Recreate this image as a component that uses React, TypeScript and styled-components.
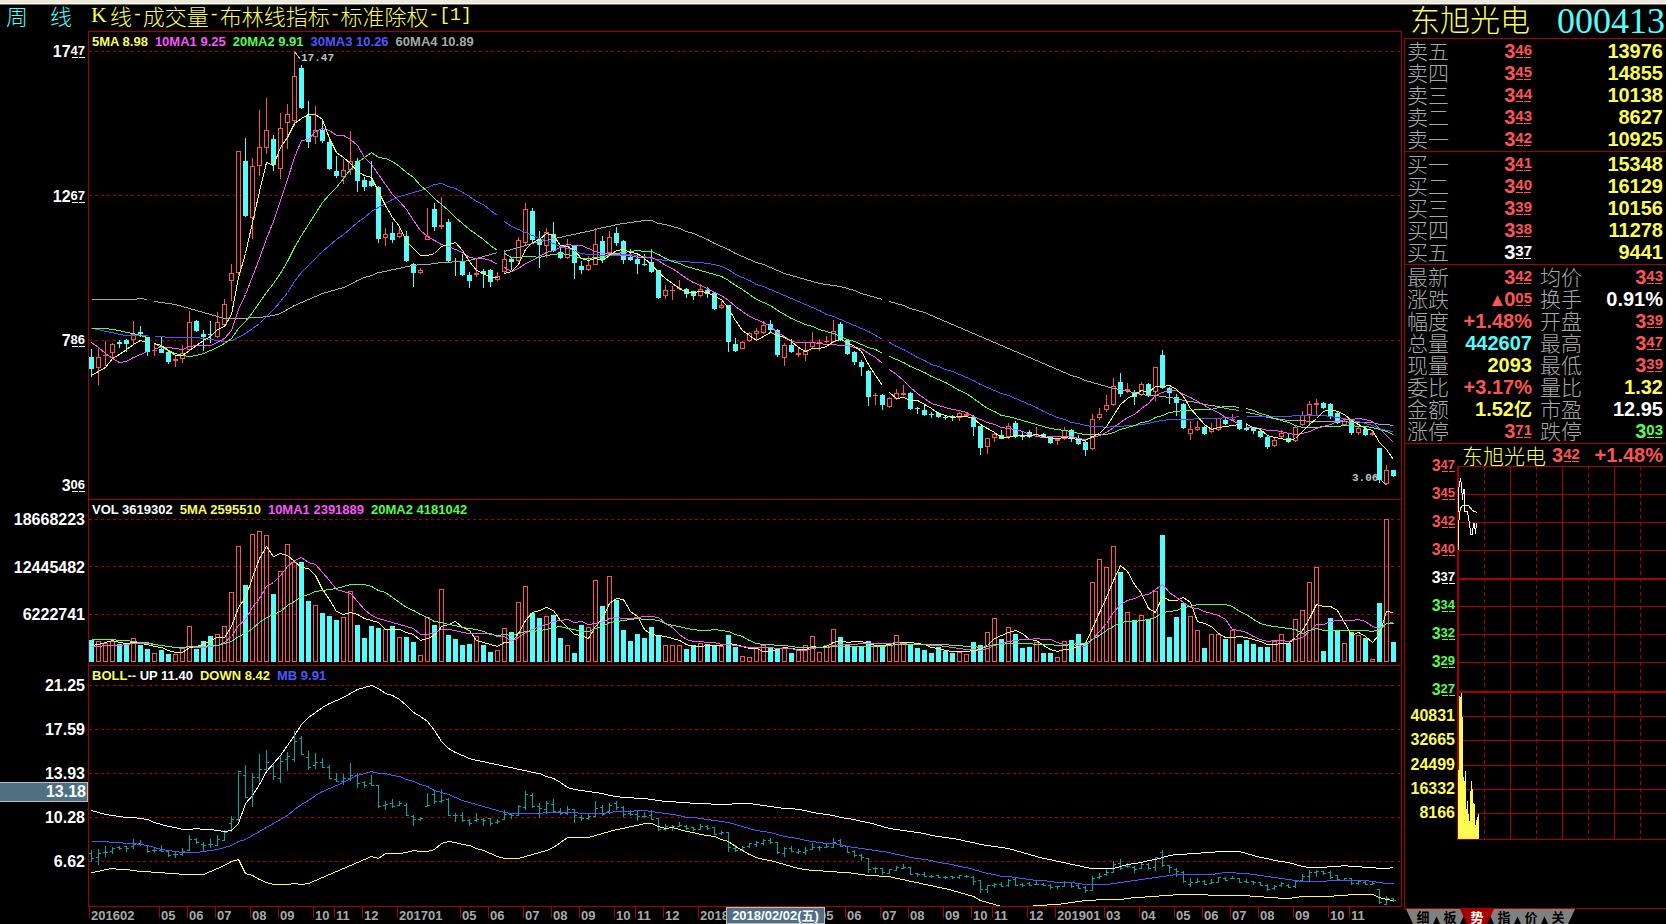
import React, { useState } from "react";
import styled, { createGlobalStyle, css } from "styled-components";

const color = {
  red: "#fc5454",
  cyan: "#54fcfc",
  yellow: "#fcfc54",
  magenta: "#fc54fc",
  green: "#54fc54",
  blue: "#5454fc",
  gray: "#a8a8a8",
  white: "#ffffff",
  line: "#a80000",
  teal: "#00a8a8",
  badge: "#4e7083",
};

const sans = `"Liberation Sans", Arial, "Noto Sans CJK SC", sans-serif`;
const cjk = `"Noto Sans CJK SC", "Liberation Sans", sans-serif`;

/* ---------- data ---------- */

type Point = [number, number];
type Candle = [number, number, number, number, 0 | 1];

// Weekly candles as canvas rows: high, body top, body bottom, low, rising flag.
// Row 51 is 17.47 and row 485 is 3.06.
const CANDLES: Candle[] = [
  [349,357,369,377,0],[347,357,368,385,1],[341,355,355,366,1],[343,344,353,358,1],[340,342,344,348,0],
  [339,340,344,352,0],[321,334,340,344,1],[326,332,334,337,0],[337,337,352,356,0],[344,350,351,356,1],
  [337,349,353,353,0],[351,352,362,364,0],[355,359,361,367,1],[345,353,359,363,1],[311,322,350,351,1],
  [320,321,331,332,0],[330,334,337,351,0],[321,334,335,343,0],[312,322,337,338,1],[299,304,325,325,1],
  [264,273,281,301,1],[151,151,273,275,1],[138,161,216,217,0],[158,166,218,239,1],[110,147,166,176,1],
  [98,130,148,154,1],[135,139,165,171,0],[113,128,169,179,1],[104,114,123,149,1],[51,76,121,126,1],
  [65,68,108,109,0],[101,116,142,148,0],[106,130,137,144,1],[119,130,141,143,0],[138,142,169,170,0],
  [156,171,176,178,0],[159,170,177,184,1],[131,161,170,175,1],[158,161,181,192,0],[177,180,187,191,0],
  [161,181,186,187,0],[186,187,239,243,0],[228,234,238,246,1],[222,233,240,243,0],[227,233,237,238,1],
  [231,236,261,262,0],[263,264,273,287,0],[268,270,273,274,1],[208,236,240,240,1],[203,209,227,231,0],
  [197,225,227,229,1],[219,222,261,262,0],[258,261,262,276,0],[254,261,275,276,0],[272,275,281,288,0],
  [258,273,275,277,1],[269,271,274,288,0],[269,270,282,287,0],[272,276,280,281,1],[250,259,272,273,1],
  [257,259,262,270,0],[237,240,261,262,1],[203,209,243,246,1],[208,211,240,242,0],[231,239,245,268,0],
  [228,232,246,258,1],[222,234,251,252,0],[245,252,258,259,0],[239,246,258,259,1],[246,246,263,279,0],
  [261,266,270,274,0],[256,265,270,271,1],[228,244,265,265,1],[236,241,260,263,0],[231,237,253,256,1],
  [227,233,243,246,0],[240,241,260,264,0],[249,257,260,261,0],[253,259,264,274,0],[254,264,265,266,0],
  [249,262,272,273,0],[270,270,298,299,0],[285,290,296,299,1],[286,290,291,300,1],[280,288,289,290,1],
  [288,289,294,298,0],[291,291,296,300,0],[284,289,296,297,1],[287,290,294,298,0],[293,293,309,310,0],
  [301,305,308,309,1],[305,305,342,352,0],[338,344,351,352,0],[341,342,349,349,1],[332,333,341,342,1],
  [328,331,334,340,1],[321,325,333,334,1],[320,324,330,333,0],[329,330,355,357,0],[343,345,358,366,1],
  [339,345,352,353,0],[347,353,355,357,1],[342,350,355,361,1],[332,342,347,348,1],[339,342,343,351,1],
  [336,341,342,343,1],[320,331,342,343,1],[322,324,340,341,0],[339,340,354,355,0],[351,352,362,365,0],
  [360,362,367,376,0],[370,371,397,406,0],[393,395,396,405,1],[394,395,405,410,0],[397,398,407,408,1],
  [389,393,399,400,1],[385,393,395,396,1],[392,393,409,410,0],[407,408,409,414,0],[404,410,415,416,0],
  [412,414,415,418,0],[412,413,417,418,0],[415,417,418,420,0],[415,416,418,421,0],[412,413,418,421,1],
  [413,414,416,417,1],[415,417,427,436,0],[426,426,448,455,0],[438,438,447,454,1],[433,434,438,442,1],
  [430,435,439,439,0],[423,426,437,439,1],[421,423,437,438,0],[432,436,437,440,0],[430,432,437,438,0],
  [427,434,435,436,1],[433,434,437,438,0],[436,437,443,444,0],[439,439,441,445,1],[427,430,439,440,1],
  [429,430,439,442,0],[435,438,444,445,0],[440,442,450,456,0],[414,419,449,450,1],[408,414,418,420,1],
  [395,405,410,412,1],[378,386,405,406,1],[373,382,394,397,0],[383,389,391,393,1],[390,392,397,405,0],
  [382,384,395,396,1],[383,384,395,397,0],[367,367,392,401,1],[350,355,388,389,0],[387,388,393,404,0],
  [394,397,403,416,0],[403,404,428,429,0],[421,429,434,440,1],[421,427,430,431,1],[426,427,434,435,0],
  [423,429,432,433,1],[418,418,430,431,1],[418,420,424,425,0],[414,419,420,421,1],[420,420,429,430,0],
  [423,428,430,431,0],[427,428,431,434,0],[430,431,437,438,0],[436,437,447,449,0],[438,440,446,447,1],
  [430,433,437,439,1],[434,438,442,443,0],[425,427,441,442,1],[411,415,425,426,1],[401,404,415,426,1],
  [399,403,405,416,1],[402,403,408,409,0],[403,404,417,419,0],[412,413,423,424,0],[419,421,425,426,1],
  [419,420,433,435,0],[426,428,433,435,1],[427,429,435,436,0],[431,433,435,436,1],[448,448,480,483,0],
  [465,470,484,485,1],[470,470,476,477,0],
];

// Weekly volume, one unit per third of a canvas row above the base line.
const VOLUMES: number[] = [
  450,454,460,454,463,463,445,466,478,490,480,492,493,475,409,477,453,438,433,409,
  307,169,285,133,124,136,312,244,163,217,216,333,346,369,378,390,382,304,405,444,
  408,414,418,408,442,441,456,496,382,405,298,435,447,465,462,439,465,486,481,415,
  426,337,289,369,384,379,375,444,466,489,405,412,271,348,259,330,420,453,432,444,
  411,435,466,466,466,477,465,460,462,466,469,435,471,499,502,470,466,474,474,472,
  489,480,466,439,487,466,418,441,465,471,471,453,466,465,460,436,457,462,474,480,
  489,471,484,489,485,493,456,465,427,385,447,412,432,474,471,457,489,489,502,454,
  450,432,460,277,208,232,169,246,367,390,376,388,304,135,441,381,339,379,421,474,
  433,433,447,420,462,450,462,471,471,454,433,459,388,361,277,232,483,384,423,460,
  426,436,444,508,339,88,456,
].map((v) => 516 - v);

const VOLUME_BASE = 662;
// Weeks whose price was adjusted; average lines restart there.
const BREAKS = [9, 59, 114, 165];

const CLOSES = CANDLES.map(([, top, bottom, , up]) => (up ? top : bottom));
const VOLUME_ROWS = VOLUMES.map((v) => VOLUME_BASE - v / 3);

const BOLL_UP: Point[] = [
  [0,810],[2,814],[4,816],[6,817],[8,819],[10,824],[13,829],[15,828],[18,830],[19,831],[20,830],[21,823],
  [22,803],[23,795],[24,784],[25,771],[26,763],[27,755],[28,745],[29,735],[30,724],[31,717],[32,712],
  [33,707],[34,703],[36,697],[38,689],[40,685],[41,688],[42,693],[43,695],[44,699],[45,705],[46,712],
  [47,716],[48,721],[49,730],[50,741],[51,748],[53,755],[54,758],[56,761],[59,766],[62,770],[64,773],
  [66,778],[67,782],[68,787],[69,789],[72,792],[75,796],[80,799],[84,802],[90,804],[92,803],[94,803],
  [97,806],[101,809],[105,814],[109,819],[112,824],[114,828],[118,832],[122,837],[124,839],[127,844],
  [131,848],[135,856],[139,862],[142,867],[144,868],[146,868],[148,864],[152,859],[154,855],[157,853],
  [161,851],[164,851],[167,857],[171,862],[173,866],[175,867],[179,865],[183,867],[184,868],[186,867],
];
const BOLL_DOWN: Point[] = [
  [0,872],[3,868],[6,870],[8,871],[11,873],[14,874],[16,874],[18,868],[20,861],[21,859],[22,873],[23,875],
  [25,882],[26,884],[28,884],[29,883],[30,884],[31,883],[33,877],[36,868],[39,859],[40,856],[41,858],
  [42,853],[44,853],[46,850],[48,851],[49,849],[50,843],[51,841],[54,845],[57,853],[59,858],[61,858],
  [62,856],[64,852],[66,847],[68,837],[71,837],[75,829],[79,823],[80,823],[82,828],[83,827],[85,831],
  [89,836],[91,841],[93,850],[95,857],[98,862],[101,868],[105,871],[108,872],[111,875],[114,876],
  [118,882],[122,888],[126,896],[127,900],[130,906],[133,906],[138,904],[141,901],[144,899],[147,899],
  [149,897],[156,894],[164,895],[171,898],[173,896],[176,896],[180,894],[183,894],[184,897],[186,900],
];

// Values of an average before enough weeks are on screen to compute it.
function interpolate(points: Point[], i: number): number {
  const next = points.findIndex(([k]) => k >= i);
  if (next <= 0) return next === 0 ? points[0][1] : points[points.length - 1][1];
  const [k0, v0] = points[next - 1];
  const [k1, v1] = points[next];
  return v0 + ((v1 - v0) * (i - k0)) / (k1 - k0);
}

function average(values: number[], n: number, lead: Point[]): number[] {
  return values.map((_, i) =>
    i < n - 1
      ? interpolate(lead, i)
      : values.slice(i - n + 1, i + 1).reduce((a, b) => a + b, 0) / n
  );
}

const MA20 = average(CLOSES, 20, [
  [0,328],[2,328],[4,330],[6,333],[8,337],[9,343],[11,350],[13,355],[14,356],[16,353],[18,347],[19,343],
]);
const PRICE_LINES = [
  {
    stroke: color.gray,
    rows: average(CLOSES, 60, [
      [0,299],[6,299],[7,298],[8,299],[9,301],[12,304],[14,308],[16,312],[18,316],[19,318],[22,318],[25,316],
      [27,313],[29,305],[31,299],[33,293],[36,287],[38,280],[41,272],[45,266],[50,262],[54,260],[58,252],[59,253],
    ]),
  },
  {
    stroke: color.blue,
    rows: average(CLOSES, 30, [
      [0,328],[3,332],[5,335],[8,335],[9,336],[12,337],[15,337],[18,340],[19,341],[20,340],[22,333],[24,323],
      [26,309],[28,292],[30,273],
    ]),
  },
  { stroke: color.green, rows: MA20 },
  {
    stroke: color.magenta,
    rows: average(CLOSES, 10, [[0,342],[1,347],[2,353],[3,358],[4,362],[5,361],[6,357],[7,354],[8,351],[9,350]]),
  },
  { stroke: color.yellow, rows: average(CLOSES, 5, [[0,375],[1,371],[2,367],[3,358],[4,354]]) },
];
const VOLUME_LINES = [
  { stroke: color.yellow, rows: average(VOLUME_ROWS, 5, [[0,645],[1,644],[2,642],[3,640],[4,642]]) },
  { stroke: color.magenta, rows: average(VOLUME_ROWS, 10, [[0,646],[3,645],[5,644],[6,643],[9,643]]) },
  {
    stroke: color.green,
    rows: average(VOLUME_ROWS, 20, [[0,639],[3,639],[6,641],[8,642],[10,645],[12,647],[15,646],[17,645],[19,644]]),
  },
];

const MONTHS: [number, string][] = [
  [0,"201602"],[10,"05"],[14,"06"],[18,"07"],[23,"08"],[27,"09"],[32,"10"],[35,"11"],[39,"12"],
  [44,"201701"],[53,"05"],[57,"06"],[62,"07"],[66,"08"],[70,"09"],[75,"10"],[78,"11"],[82,"12"],
  [87,"2018"],[104,"05"],[108,"06"],[113,"07"],[117,"08"],[122,"09"],[126,"10"],[129,"11"],[134,"12"],
  [138,"201901"],[145,"03"],[150,"04"],[155,"05"],[159,"06"],[163,"07"],[167,"08"],[172,"09"],[177,"10"],[180,"11"],
];

type Tone = keyof typeof color;
type Quote = { text: string; tone: Tone; price?: boolean; mark?: boolean };

const q = (text: string, tone: Tone, price = false, mark = false): Quote => ({ text, tone, price, mark });

const ASKS: [string, Quote, string][] = [
  ["卖五", q("346", "red", true), "13976"],
  ["卖四", q("345", "red", true), "14855"],
  ["卖三", q("344", "red", true), "10138"],
  ["卖二", q("343", "red", true), "8627"],
  ["卖一", q("342", "red", true), "10925"],
];
const BIDS: [string, Quote, string][] = [
  ["买一", q("341", "red", true), "15348"],
  ["买二", q("340", "red", true), "16129"],
  ["买三", q("339", "red", true), "10156"],
  ["买四", q("338", "red", true), "11278"],
  ["买五", q("337", "white", true), "9441"],
];
const STATS: [string, Quote, string, Quote][] = [
  ["最新", q("342", "red", true), "均价", q("343", "red", true)],
  ["涨跌", q("005", "red", true, true), "换手", q("0.91%", "white")],
  ["幅度", q("+1.48%", "red"), "开盘", q("339", "red", true)],
  ["总量", q("442607", "cyan"), "最高", q("347", "red", true)],
  ["现量", q("2093", "yellow"), "最低", q("339", "red", true)],
  ["委比", q("+3.17%", "red"), "量比", q("1.32", "yellow")],
  ["金额", q("1.52亿", "yellow"), "市盈", q("12.95", "white")],
  ["涨停", q("371", "red", true), "跌停", q("303", "green", true)],
];
const DAY_PRICES: [string, Tone][] = [
  ["347","red"],["345","red"],["342","red"],["340","red"],["337","white"],
  ["334","green"],["332","green"],["329","green"],["327","green"],
];
const DAY_VOLUMES = ["40831", "32665", "24499", "16332", "8166"];
const DAY_BARS = [770,696,697,693,717,777,781,771,809,801,814,821,791,781,789,803,804,825,820,817,814];
const TABS = ["细", "板", "势", "指", "价", "关"];

/* ---------- styles ---------- */

const GlobalStyle = createGlobalStyle`
  * { box-sizing: border-box; }
  body { margin: 0; background: #000; color: #fff; font-family: ${sans}; }
`;

const Page = styled.div`
  background: #000;
`;

const WindowEdge = styled.div`
  height: 5px;
  background: #ece9d8;
  border-bottom: 1px solid #716f64;
  box-shadow: inset 0 -1px 0 #ffffff;
`;

const Columns = styled.main`
  display: grid;
  grid-template-columns: minmax(0, 1fr) 262px;
  column-gap: 2px;
`;

const Charts = styled.section`
  min-width: 0;
`;

const TitleRow = styled.header`
  display: grid;
  grid-template-columns: 88px 1fr;
  height: 26px;
  font: 300 22px/20px ${cjk};
`;

const Period = styled.div`
  display: flex;
  gap: 22px;
  padding-left: 6px;
  color: ${color.cyan};
`;

const Title = styled.h1`
  display: flex;
  margin: 0;
  padding-left: 3px;
  font: inherit;
  color: ${color.yellow};
  white-space: nowrap;
`;

const TitleLetter = styled.span`
  width: 19px;
  font-family: "Liberation Serif", serif;
`;

const TitleSign = styled.span`
  font-family: "Liberation Mono", monospace;
  font-size: 18px;
`;

const Panel = styled.section<{ $height: number }>`
  display: grid;
  grid-template-columns: 88px minmax(0, 1fr);
  height: ${(p) => p.$height}px;
`;

const Scale = styled.div<{ $bottom: number }>`
  position: relative;
  display: flex;
  flex-direction: column;
  justify-content: space-between;
  align-items: flex-end;
  padding: 11px 3px ${(p) => p.$bottom}px 0;
  font: bold 16px/20px ${sans};
`;

const CursorValue = styled.output`
  position: absolute;
  left: 0;
  right: 0;
  top: 117px;
  height: 20px;
  padding-right: 1px;
  border: 1px solid #c0c0c0;
  border-left: 0;
  background: ${color.badge};
  line-height: 18px;
  text-align: right;
`;

const Plot = styled.div`
  display: grid;
  grid-template: minmax(0, 1fr) / minmax(0, 1fr);
  border: solid ${color.line};
  border-width: 1px 1px 0;
`;

const Drawing = styled.svg`
  grid-area: 1 / 1;
  display: block;
  width: 100%;
  height: 100%;
  shape-rendering: crispEdges;
`;

const Legend = styled.div`
  grid-area: 1 / 1;
  display: flex;
  align-self: start;
  gap: 7px;
  padding: 2px 0 0 3px;
  font: bold 13px/16px ${sans};
  white-space: nowrap;
`;

const Tinted = styled.span<{ $tone: Tone }>`
  color: ${(p) => color[p.$tone]};
`;

const TimeRow = styled.div`
  position: relative;
  height: 18px;
  margin-left: 88px;
  border-top: 1px solid ${color.line};
`;

const TimeSvg = styled.svg`
  display: block;
  width: 100%;
  height: 17px;
  shape-rendering: crispEdges;
  font: bold 13px ${sans};
`;

const CursorDate = styled.output`
  position: absolute;
  left: 638px;
  top: 0;
  width: 99px;
  height: 17px;
  border: 1px solid #c0c0c0;
  background: ${color.badge};
  font: bold 13px/16px ${sans};
  text-align: center;
  white-space: nowrap;
`;

const Side = styled.aside`
  display: flex;
  flex-direction: column;
`;

const StockHead = styled.header`
  display: flex;
  justify-content: space-between;
  height: 33px;
  padding: 0 1px 0 6px;
  color: ${color.yellow};
`;

const StockName = styled.h2`
  margin: 0;
  font: 300 30px/26px ${cjk};
`;

const StockCode = styled.span`
  font: 36px/32px "Liberation Serif", serif;
  color: ${color.cyan};
`;

const Frame = styled.div`
  display: flex;
  flex-direction: column;
  height: 871px;
  border-left: 1px solid ${color.line};
  border-bottom: 1px solid ${color.line};
`;

const Block = styled.section`
  border-top: 1px solid ${color.line};
  padding: 1px 3px 1px 2px;
`;

const Quotes = styled.table`
  width: 100%;
  border-collapse: collapse;
  table-layout: fixed;
  font: bold 20px/22px ${sans};
`;

const Label = styled.th<{ $second?: boolean }>`
  width: ${(p) => (p.$second ? 50 : 42)}px;
  height: 22px;
  padding: 0 0 0 ${(p) => (p.$second ? 8 : 0)}px;
  font: 300 21px/20px ${cjk};
  text-align: left;
  vertical-align: top;
  white-space: nowrap;
  color: ${color.gray};
`;

const Value = styled.td<{ $tone: Tone; $first?: boolean }>`
  ${(p) => p.$first && css`width: 83px;`}
  height: 22px;
  padding: 0;
  text-align: right;
  vertical-align: top;
  white-space: nowrap;
  color: ${(p) => color[p.$tone]};
`;

const Unit = styled.span`
  font-size: 18px;
  line-height: 18px;
`;

const Cents = styled.span<{ $large: boolean }>`
  display: inline-block;
  font-size: ${(p) => (p.$large ? 15 : 13)}px;
  line-height: ${(p) => (p.$large ? 17 : 15)}px;
  vertical-align: ${(p) => (p.$large ? 3 : 2)}px;
  background: linear-gradient(to right, transparent 1px, currentColor 1px) bottom left /
    ${(p) => (p.$large ? 8 : 7)}px 1px repeat-x;
`;

const Rise = styled.svg`
  width: 11px;
  height: 11px;
  margin-right: 1px;
`;

const DayHead = styled.header`
  display: flex;
  align-items: center;
  height: 23px;
  padding-left: 57px;
  border-top: 1px solid ${color.line};
  font: bold 20px/22px ${sans};
  color: ${color.red};
  white-space: nowrap;
`;

const DayName = styled.h3`
  margin: 0 6px 0 0;
  font: 300 21px/20px ${cjk};
  color: ${color.yellow};
`;

const DayChange = styled.span`
  margin-left: auto;
  padding-right: 3px;
`;

const DayChart = styled.div`
  display: grid;
  grid-template-columns: 52px minmax(0, 1fr);
  height: 374px;
`;

const DayCanvas = styled.div`
  display: grid;
  grid-template: minmax(0, 1fr) / minmax(0, 1fr);
`;

const DayScale = styled.div`
  display: flex;
  flex-direction: column;
  align-items: flex-end;
  padding-right: 2px;
  font: bold 16px/20px ${sans};
`;

const DayLabels = styled.div<{ $height: number; $top: number }>`
  display: flex;
  flex-direction: column;
  justify-content: space-between;
  align-items: flex-end;
  height: ${(p) => p.$height}px;
  margin-top: ${(p) => p.$top}px;
`;

const Tabs = styled.div`
  display: flex;
  height: 15px;
  padding-left: 2px;
`;

const Tab = styled.button<{ $active: boolean }>`
  position: relative;
  z-index: ${(p) => (p.$active ? 1 : 0)};
  width: 34px;
  height: 15px;
  margin: 0 -7px 0 0;
  padding: 0;
  border: 0;
  clip-path: polygon(0 0, 100% 0, calc(100% - 7px) 100%, 7px 100%);
  background: ${(p) => (p.$active ? color.line : "#808080")};
  color: ${(p) => (p.$active ? "#fff" : "#000")};
  font: bold 13px/15px ${cjk};
  text-align: center;
`;

/* ---------- drawing helpers ---------- */

const xAt = (i: number) => 91 + 7 * i;

function Line({ rows, stroke, breaks = [] }: { rows: number[]; stroke: string; breaks?: number[] }) {
  const d = rows
    .map((y, i) => `${i === 0 || breaks.includes(i) ? "M" : "L"}${xAt(i) + 0.5} ${Math.round(y) + 0.5}`)
    .join("");
  return <path d={d} fill="none" stroke={stroke} />;
}

function GridRows({ rows, top }: { rows: number[]; top: number }) {
  return (
    <>
      {rows.map((y) => (
        <line key={y} x1="0" x2="100%" y1={y - top + 0.5} y2={y - top + 0.5} stroke={color.line} strokeDasharray="3 3" />
      ))}
    </>
  );
}

function Price({ text, large = true }: { text: string; large?: boolean }) {
  return (
    <span>
      {text.slice(0, -2)}
      <Cents $large={large}>{text.slice(-2)}</Cents>
    </span>
  );
}

function QuoteText({ quote }: { quote: Quote }) {
  const unit = quote.text.endsWith("亿");
  return (
    <>
      {quote.mark && (
        <Rise viewBox="0 0 11 11" role="img" aria-label="up">
          <path d="M5.5 0 11 11H0Z" fill={color.red} />
        </Rise>
      )}
      {quote.price ? <Price text={quote.text} /> : unit ? quote.text.slice(0, -1) : quote.text}
      {unit && <Unit>亿</Unit>}
    </>
  );
}

function PricePlot() {
  return (
    <Drawing aria-label="K线">
      <GridRows rows={[51, 195, 340]} top={32} />
      <g transform="translate(-89 -32)">
        {CANDLES.map(([high, top, bottom, low, up], i) => {
          const x = xAt(i);
          const tone = up ? color.red : color.cyan;
          const body = Math.max(1, bottom - top);
          return (
            <g key={i} fill={tone}>
              <rect x={x} y={high} width="1" height={low - high} />
              <rect x={x - 2} y={top} width="5" height={body} />
              {up === 1 && body > 2 && <rect x={x - 1} y={top + 1} width="3" height={body - 2} fill="#000" />}
            </g>
          );
        })}
        {PRICE_LINES.map((l) => (
          <Line key={l.stroke} {...l} breaks={BREAKS} />
        ))}
        <g fill="#c0c0c0" fontFamily="Liberation Mono, monospace" fontWeight="bold" fontSize="11">
          <text x="301" y="61">17.47</text>
          <text x="1352" y="481">3.06</text>
        </g>
        <path d="M295 52l5 7M1380 479l6 6" stroke="#c0c0c0" />
      </g>
    </Drawing>
  );
}

function VolumePlot() {
  return (
    <Drawing aria-label="成交量">
      <GridRows rows={[519, 566, 614]} top={500} />
      <g transform="translate(-89 -500)">
        {VOLUME_ROWS.map((row, i) => {
          const y = Math.round(row);
          const x = xAt(i) - 2;
          return CANDLES[i][4] ? (
            <rect key={i} x={x + 0.5} y={y + 0.5} width="4" height={VOLUME_BASE - y - 1} fill="none" stroke={color.red} />
          ) : (
            <rect key={i} x={x} y={y} width="5" height={VOLUME_BASE - y} fill={color.cyan} />
          );
        })}
        {VOLUME_LINES.map((l) => (
          <Line key={l.stroke} {...l} />
        ))}
      </g>
    </Drawing>
  );
}

// Rows of the price panel carried over to the Bollinger panel's scale.
const toBoll = (row: number) => Math.round(861 - (7.86 - (row - 340) / 30.15 - 6.62) * 12.03);

function BollPlot() {
  const weeks = CANDLES.map((_, i) => i);
  return (
    <Drawing aria-label="布林线">
      <GridRows rows={[685, 729, 773, 817, 861]} top={666} />
      <g transform="translate(-89 -666)">
        {CANDLES.map(([high, top, bottom, low, up], i) => {
          const x = xAt(i);
          const open = toBoll(up ? bottom : top);
          const close = toBoll(up ? top : bottom);
          return (
            <path
              key={i}
              stroke={color.teal}
              d={`M${x + 0.5} ${toBoll(high)}V${toBoll(low) + 1}M${x - 2} ${open + 0.5}H${x}M${x + 1} ${close + 0.5}h2`}
            />
          );
        })}
        <Line rows={weeks.map((i) => interpolate(BOLL_UP, i))} stroke={color.white} />
        <Line rows={weeks.map((i) => interpolate(BOLL_DOWN, i))} stroke={color.yellow} />
        <Line rows={MA20.map(toBoll)} stroke={color.blue} />
      </g>
    </Drawing>
  );
}

function DayPlot() {
  return (
    <Drawing aria-label="分时">
      <g fill={color.line}>
        {[466, 494, 522, 550, 606, 634, 662, 716, 740, 765, 789, 813, 839].map((y) => (
          <rect key={y} x="0" y={y - 466} width="100%" height="1" />
        ))}
        <rect y="112" width="100%" height="2" />
        <rect y="225" width="100%" height="2" />
        <rect width="2" height="374" />
      </g>
      <g stroke={color.line}>
        {[0, 1, 2, 3].map((k) => (
          <path key={k} d={`M${27.5 + 52 * k} 0V374`} strokeDasharray="4 3" />
        ))}
        {[0, 1, 2].map((k) => (
          <path key={k} d={`M${53.5 + 52 * k} 0V374`} />
        ))}
      </g>
      <g transform="translate(-1457 -466)">
        {DAY_BARS.map((y, i) => (
          <rect key={i} x={1458 + i} y={y} width="1" height={839 - y} fill={color.yellow} />
        ))}
        <path
          fill="none"
          stroke={color.white}
          d="M1458.5 512V490L1460.5 478L1461.5 485L1462.5 500L1463.5 489H1464.5V511H1467.5L1468.5 518L1469.5 523L1470.5 533V534H1472.5L1473.5 523H1474.5L1475.5 534L1476.5 523"
        />
        <path
          fill="none"
          stroke={color.yellow}
          d="M1458.5 550V525L1459.5 515L1460.5 508L1462.5 505.5H1468.5L1470.5 508L1472.5 510.5L1474.5 511.5L1477.5 512.5"
        />
      </g>
    </Drawing>
  );
}

function OrderBook({ rows }: { rows: [string, Quote, string][] }) {
  return (
    <Block>
      <Quotes>
        <tbody>
          {rows.map(([label, price, amount]) => (
            <tr key={label}>
              <Label scope="row">{label}</Label>
              <Value $tone={price.tone} $first>
                <QuoteText quote={price} />
              </Value>
              <Value $tone="yellow">{amount}</Value>
            </tr>
          ))}
        </tbody>
      </Quotes>
    </Block>
  );
}

export default function App() {
  const [tab, setTab] = useState("势");
  return (
    <Page>
      <GlobalStyle />
      <WindowEdge />
      <Columns>
        <Charts>
          <TitleRow>
            <Period>
              <span>周</span>
              <span>线</span>
            </Period>
            <Title>
              <TitleLetter>K</TitleLetter>线<TitleSign>-</TitleSign>成交量<TitleSign>-</TitleSign>布林线指标
              <TitleSign>-</TitleSign>标准除权<TitleSign>-[1]</TitleSign>
            </Title>
          </TitleRow>

          <Panel $height={468}>
            <Scale $bottom={3}>
              {["1747", "1267", "786", "306"].map((t) => (
                <Price key={t} text={t} large={false} />
              ))}
            </Scale>
            <Plot>
              <PricePlot />
              <Legend>
                <Tinted $tone="yellow">5MA 8.98</Tinted>
                <Tinted $tone="magenta">10MA1 9.25</Tinted>
                <Tinted $tone="green">20MA2 9.91</Tinted>
                <Tinted $tone="blue">30MA3 10.26</Tinted>
                <Tinted $tone="gray">60MA4 10.89</Tinted>
              </Legend>
            </Plot>
          </Panel>

          <Panel $height={166}>
            <Scale $bottom={40}>
              <span>18668223</span>
              <span>12445482</span>
              <span>6222741</span>
            </Scale>
            <Plot>
              <VolumePlot />
              <Legend>
                <Tinted $tone="white">VOL 3619302</Tinted>
                <Tinted $tone="yellow">5MA 2595510</Tinted>
                <Tinted $tone="magenta">10MA1 2391889</Tinted>
                <Tinted $tone="green">20MA2 4181042</Tinted>
              </Legend>
            </Plot>
          </Panel>

          <Panel $height={241}>
            <Scale $bottom={34}>
              <span>21.25</span>
              <span>17.59</span>
              <span>13.93</span>
              <span>10.28</span>
              <span>6.62</span>
              <CursorValue>13.18</CursorValue>
            </Scale>
            <Plot>
              <BollPlot />
              <Legend>
                <span>
                  <Tinted $tone="yellow">BOLL-- </Tinted>
                  <Tinted $tone="white">UP 11.40</Tinted>
                </span>
                <Tinted $tone="yellow">DOWN 8.42</Tinted>
                <Tinted $tone="blue">MB 9.91</Tinted>
              </Legend>
            </Plot>
          </Panel>

          <TimeRow>
            <TimeSvg>
              {MONTHS.map(([i, text]) => (
                <g key={i}>
                  <rect x={1 + 7 * i} y="0" width="1" height="11" fill={color.line} />
                  <text x={3 + 7 * i} y="13" fill={color.gray}>
                    {text}
                  </text>
                </g>
              ))}
            </TimeSvg>
            <CursorDate>2018/02/02(五)</CursorDate>
          </TimeRow>
        </Charts>

        <Side>
          <StockHead>
            <StockName>东旭光电</StockName>
            <StockCode>000413</StockCode>
          </StockHead>
          <Frame>
            <OrderBook rows={ASKS} />
            <OrderBook rows={BIDS} />
            <Block>
              <Quotes>
                <tbody>
                  {STATS.map(([label, value, label2, value2]) => (
                    <tr key={label}>
                      <Label scope="row">{label}</Label>
                      <Value $tone={value.tone} $first>
                        <QuoteText quote={value} />
                      </Value>
                      <Label scope="row" $second>
                        {label2}
                      </Label>
                      <Value $tone={value2.tone}>
                        <QuoteText quote={value2} />
                      </Value>
                    </tr>
                  ))}
                </tbody>
              </Quotes>
            </Block>
            <DayHead>
              <DayName>东旭光电</DayName>
              <Price text="342" />
              <DayChange>+1.48%</DayChange>
            </DayHead>
            <DayChart>
              <DayScale>
                <DayLabels $height={244} $top={-10}>
                  {DAY_PRICES.map(([text, tone]) => (
                    <Tinted key={text} $tone={tone}>
                      <Price text={text} large={false} />
                    </Tinted>
                  ))}
                </DayLabels>
                <DayLabels $height={117} $top={6}>
                  {DAY_VOLUMES.map((text) => (
                    <Tinted key={text} $tone="yellow">
                      {text}
                    </Tinted>
                  ))}
                </DayLabels>
              </DayScale>
              <DayCanvas>
                <DayPlot />
              </DayCanvas>
            </DayChart>
          </Frame>
          <Tabs role="tablist">
            {TABS.map((name) => (
              <Tab key={name} type="button" role="tab" aria-selected={name === tab} $active={name === tab} onClick={() => setTab(name)}>
                {name}
              </Tab>
            ))}
          </Tabs>
        </Side>
      </Columns>
    </Page>
  );
}
